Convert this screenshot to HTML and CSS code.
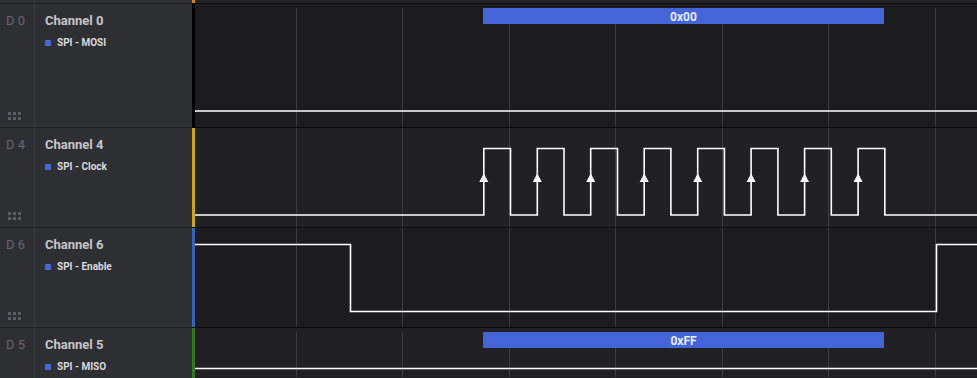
FILE: index.html
```html
<!DOCTYPE html>
<html lang="en">
<head>
  <meta charset="UTF-8" />
  <title>Logic – Channels</title>
  <link rel="stylesheet" href="styles.css">
</head>
<body>
  <div class="timeline">

    <div class="row row-top">
      <div class="label"><div class="index"></div><div class="name"></div></div>
      <div class="color-bar orange"></div>
      <div class="wave"></div>
    </div>

    <div class="row row-tall">
      <div class="label">
        <div class="index">
          <span>D 0</span>
          <svg class="grip" width="13" height="8" viewBox="0 0 13 8"><g fill="#5e5f64"><rect x="0" y="0" width="3" height="3" rx="0.6"/><rect x="5" y="0" width="3" height="3" rx="0.6"/><rect x="10" y="0" width="3" height="3" rx="0.6"/><rect x="0" y="5" width="3" height="3" rx="0.6"/><rect x="5" y="5" width="3" height="3" rx="0.6"/><rect x="10" y="5" width="3" height="3" rx="0.6"/></g></svg>
        </div>
        <div class="name">
          <div class="channel">Channel 0</div>
          <div class="analyzer"><i class="dot"></i>SPI - MOSI</div>
        </div>
      </div>
      <div class="color-bar black"></div>
      <div class="wave dark">
        <svg width="782" height="123" viewBox="0 0 782 123">
          <g class="grid"><path d="M101.5 4V123M207.5 4V123M314.5 4V123M420.5 4V123M527.5 4V123M633.5 4V123M740.5 4V123"/></g>
          <rect class="frame" x="288" y="4" width="401" height="16"/>
          <text class="frame-text" x="488.5" y="16.5">0x00</text>
          <path class="trace" d="M0 107H782"/>
        </svg>
      </div>
    </div>

    <div class="row">
      <div class="label">
        <div class="index">
          <span>D 4</span>
          <svg class="grip" width="13" height="8" viewBox="0 0 13 8"><g fill="#5e5f64"><rect x="0" y="0" width="3" height="3" rx="0.6"/><rect x="5" y="0" width="3" height="3" rx="0.6"/><rect x="10" y="0" width="3" height="3" rx="0.6"/><rect x="0" y="5" width="3" height="3" rx="0.6"/><rect x="5" y="5" width="3" height="3" rx="0.6"/><rect x="10" y="5" width="3" height="3" rx="0.6"/></g></svg>
        </div>
        <div class="name">
          <div class="channel">Channel 4</div>
          <div class="analyzer"><i class="dot"></i>SPI - Clock</div>
        </div>
      </div>
      <div class="color-bar yellow"></div>
      <div class="wave light">
        <svg width="782" height="99" viewBox="0 0 782 99">
          <g class="grid"><path d="M101.5 0V99M207.5 0V99M314.5 0V99M420.5 0V99M527.5 0V99M633.5 0V99M740.5 0V99"/></g>
          <path class="trace" d="M0 87H288.8V20.5H315.5V87H342.3V20.5H369V87H395.7V20.5H422.5V87H449.2V20.5H475.9V87H502.7V20.5H529.4V87H556.1V20.5H582.9V87H609.6V20.5H636.3V87H663.1V20.5H689.8V87H782"/>
          <g class="edge">
            <polygon points="284.3,54 288.8,45.5 293.3,54"/>
            <polygon points="337.8,54 342.3,45.5 346.8,54"/>
            <polygon points="391.2,54 395.7,45.5 400.2,54"/>
            <polygon points="444.7,54 449.2,45.5 453.7,54"/>
            <polygon points="498.2,54 502.7,45.5 507.2,54"/>
            <polygon points="551.6,54 556.1,45.5 560.6,54"/>
            <polygon points="605.1,54 609.6,45.5 614.1,54"/>
            <polygon points="658.6,54 663.1,45.5 667.6,54"/>
          </g>
        </svg>
      </div>
    </div>

    <div class="row">
      <div class="label">
        <div class="index">
          <span>D 6</span>
          <svg class="grip" width="13" height="8" viewBox="0 0 13 8"><g fill="#5e5f64"><rect x="0" y="0" width="3" height="3" rx="0.6"/><rect x="5" y="0" width="3" height="3" rx="0.6"/><rect x="10" y="0" width="3" height="3" rx="0.6"/><rect x="0" y="5" width="3" height="3" rx="0.6"/><rect x="5" y="5" width="3" height="3" rx="0.6"/><rect x="10" y="5" width="3" height="3" rx="0.6"/></g></svg>
        </div>
        <div class="name">
          <div class="channel">Channel 6</div>
          <div class="analyzer"><i class="dot"></i>SPI - Enable</div>
        </div>
      </div>
      <div class="color-bar blue"></div>
      <div class="wave dark">
        <svg width="782" height="99" viewBox="0 0 782 99">
          <g class="grid"><path d="M101.5 0V99M207.5 0V99M314.5 0V99M420.5 0V99M527.5 0V99M633.5 0V99M740.5 0V99"/></g>
          <path class="trace" d="M0 16.5H155.5V83.5H741.5V16.5H782"/>
        </svg>
      </div>
    </div>

    <div class="row row-last">
      <div class="label">
        <div class="index">
          <span>D 5</span>
        </div>
        <div class="name">
          <div class="channel">Channel 5</div>
          <div class="analyzer"><i class="dot"></i>SPI - MISO</div>
        </div>
      </div>
      <div class="color-bar green"></div>
      <div class="wave light">
        <svg width="782" height="49" viewBox="0 0 782 49">
          <g class="grid"><path d="M101.5 4V49M207.5 4V49M314.5 4V49M420.5 4V49M527.5 4V49M633.5 4V49M740.5 4V49"/></g>
          <rect class="frame" x="288" y="4" width="401" height="16"/>
          <text class="frame-text" x="488.5" y="16.5">0xFF</text>
          <path class="trace" d="M0 40.5H782"/>
        </svg>
      </div>
    </div>

  </div>
</body>
</html>
```

FILE: styles.css
```css
* {
  box-sizing: border-box;
}

body {
  margin: 0;
  background: #1c1c1e;
  font-family: Roboto, 'Liberation Sans', sans-serif;
  overflow: hidden;
}

.timeline {
  width: 977px;
  height: 378px;
  overflow: hidden;
  display: flex;
  flex-direction: column;
}

.row {
  display: flex;
  height: 100px;
  flex-shrink: 0;
}

.row-top {
  height: 3px;
}

.row-tall {
  height: 124px;
}

.row-last {
  height: 51px;
}

.label {
  width: 192px;
  display: flex;
  background: #2e2f33;
  border-top: 1px solid #202125;
}

.row-top .label,
.row-top .color-bar,
.row-top .wave {
  border-top: none;
}

.index {
  width: 35px;
  border-right: 1px solid #3a3b40;
  padding: 9px 0 7px 6px;
  display: flex;
  flex-direction: column;
  justify-content: space-between;
  align-items: flex-start;
}

.index span {
  font-size: 13px;
  line-height: 16px;
  color: #66676b;
}

.grip {
  display: block;
  margin-left: 2px;
}

.name {
  flex: 1;
  padding: 9px 0 0 10px;
}

.channel {
  font-size: 13px;
  line-height: 16px;
  font-weight: 700;
  color: #c6c6c8;
}

.analyzer {
  margin-top: 8px;
  display: flex;
  align-items: center;
  font-size: 10px;
  line-height: 12px;
  font-weight: 700;
  color: #dadadc;
}

.dot {
  width: 6px;
  height: 6px;
  border-radius: 1px;
  background: #4566da;
  margin-right: 6px;
}

.color-bar {
  width: 3px;
  border-top: 1px solid #0b0b0c;
}

.orange { background: #d98114; }
.black { background: #000; }
.yellow { background: #c9a716; }
.blue { background: #3362c0; }
.green { background: #2d7a22; }

.wave {
  flex: 1;
  border-top: 1px solid #0b0b0c;
  background: #232325;
}

.wave svg {
  display: block;
}

.wave.dark {
  background: #1c1c1e;
}

.wave.light {
  background: #212123;
}

.grid path {
  stroke: #3c3c3f;
  stroke-width: 1;
  fill: none;
}

.trace {
  fill: none;
  stroke: #fff;
  stroke-width: 1.6;
}

.edge polygon {
  fill: #fff;
}

.frame {
  fill: #4465d8;
}

.frame-text {
  fill: #e9edff;
  font-size: 12px;
  font-weight: 700;
  text-anchor: middle;
}
```
